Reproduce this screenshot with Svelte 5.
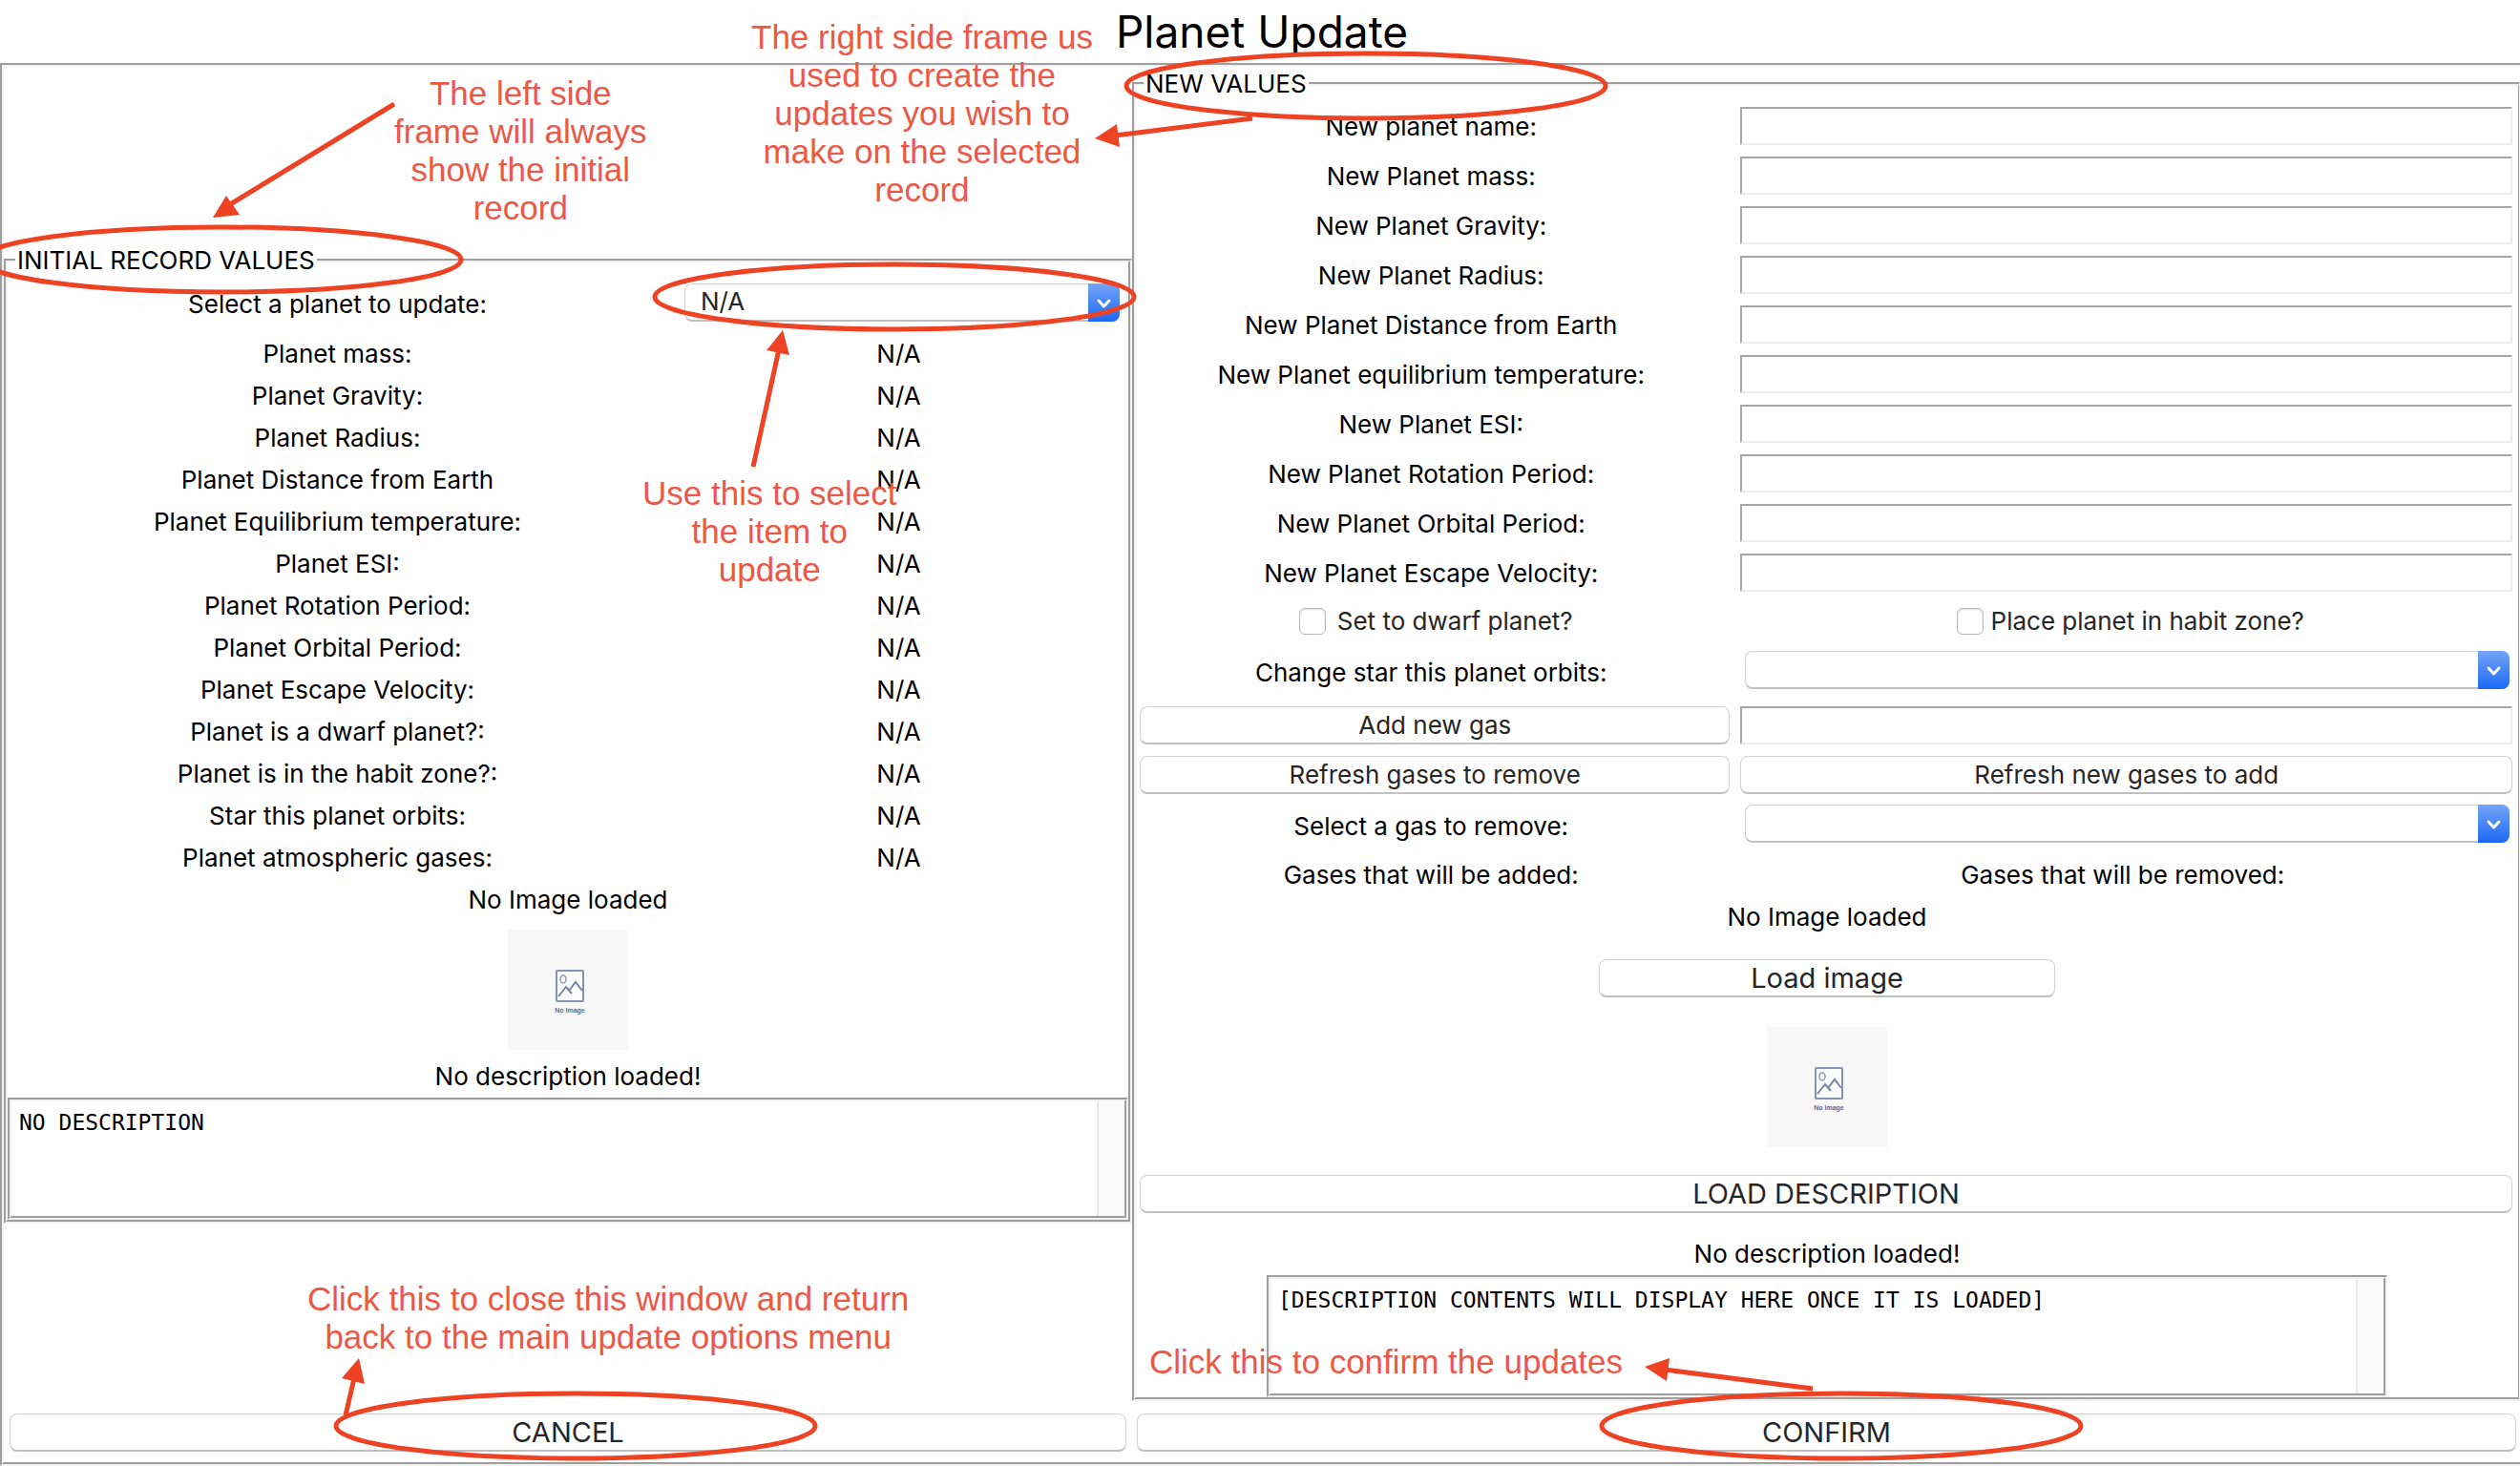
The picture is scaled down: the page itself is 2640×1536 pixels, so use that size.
<script>
  const facts = [
    'Planet mass:', 'Planet Gravity:', 'Planet Radius:', 'Planet Distance from Earth',
    'Planet Equilibrium temperature:', 'Planet ESI:', 'Planet Rotation Period:',
    'Planet Orbital Period:', 'Planet Escape Velocity:', 'Planet is a dwarf planet?:',
    'Planet is in the habit zone?:', 'Star this planet orbits:', 'Planet atmospheric gases:'
  ];
  const fields = [
    'New planet name:', 'New Planet mass:', 'New Planet Gravity:', 'New Planet Radius:',
    'New Planet Distance from Earth', 'New Planet equilibrium temperature:', 'New Planet ESI:',
    'New Planet Rotation Period:', 'New Planet Orbital Period:', 'New Planet Escape Velocity:'
  ];
  const rings = [[232, 272], [1431, 90], [937, 311], [603, 1494], [1929, 1494]];
  const arrows = [
    { line: 'M413 109L238 216', head: '223,228 237,205 251,225' },
    { line: 'M1312 124L1168 142', head: '1147,145 1170,130 1173,154' },
    { line: 'M789 489L816 366', head: '820,346 803,367 827,372' },
    { line: 'M362 1483L371 1444', head: '376,1423 358,1444 382,1450' },
    { line: 'M1899 1455L1744 1435', head: '1723,1432 1749,1423 1746,1447' }
  ];
  let planet = $state('N/A');
</script>

{#snippet placeholder()}
  <svg class="placeholder" viewBox="0 0 126 126" role="img" aria-label="No image">
    <rect width="126" height="126" fill="#f7f7f7" />
    <rect x="51" y="43" width="28" height="32" rx="1" fill="#fbfbfc" stroke="#8493b3" stroke-width="2" />
    <ellipse cx="58" cy="52" rx="3" ry="4" fill="none" stroke="#8a98b5" stroke-width="1.5" />
    <path d="M53 70L61 60L67 67M64 64L71 55L78 64" fill="none" stroke="#7485a6" stroke-width="2" />
    <text x="65" y="87" text-anchor="middle">No Image</text>
  </svg>
{/snippet}

{#snippet chevron()}
  <span class="chevron">
    <svg viewBox="0 0 33 40" aria-hidden="true"><path d="M11 18L16.500 24L22 18" fill="none" stroke="#fff" stroke-width="3" stroke-linecap="round" stroke-linejoin="round" /></svg>
  </span>
{/snippet}

<div class="app">
  <h1>Planet Update</h1>
  <main>
    <div class="panels">
      <fieldset class="initial">
        <legend>INITIAL RECORD VALUES</legend>
        <div class="pair first">
          <label for="planet">Select a planet to update:</label>
          <div class="select">
            <select id="planet" bind:value={planet}><option>N/A</option></select>
            {@render chevron()}
          </div>
        </div>
        <dl>
          {#each facts as fact}
            <div class="pair"><dt>{fact}</dt><dd>N/A</dd></div>
          {/each}
        </dl>
        <p>No Image loaded</p>
        <figure>{@render placeholder()}</figure>
        <label class="caption" for="description">No description loaded!</label>
        <div class="textbox">
          <textarea id="description" readonly>NO DESCRIPTION</textarea>
          <span class="track"></span>
        </div>
      </fieldset>

      <fieldset class="updates">
        <legend>NEW VALUES</legend>
        <div class="form">
          {#each fields as field, i}
            <label for="field{i}">{field}</label>
            <input id="field{i}" type="text" />
          {/each}
          <label class="check"><input type="checkbox" /><span>Set to dwarf planet?</span></label>
          <label class="check tight"><input type="checkbox" /><span>Place planet in habit zone?</span></label>
          <label for="star">Change star this planet orbits:</label>
          <div class="select">
            <select id="star"><option value="" aria-label="None"></option></select>
            {@render chevron()}
          </div>
          <button type="button">Add new gas</button>
          <input type="text" aria-label="New gas" />
          <button type="button">Refresh gases to remove</button>
          <button type="button">Refresh new gases to add</button>
          <label for="gas">Select a gas to remove:</label>
          <div class="select">
            <select id="gas"><option value="" aria-label="None"></option></select>
            {@render chevron()}
          </div>
          <span class="cell">Gases that will be added:</span>
          <span class="cell">Gases that will be removed:</span>
        </div>
        <p>No Image loaded</p>
        <button type="button" class="large load-image">Load image</button>
        <figure>{@render placeholder()}</figure>
        <div class="bar"><button type="button" class="large">LOAD DESCRIPTION</button></div>
        <label class="caption" for="new-description">No description loaded!</label>
        <div class="textbox narrow">
          <textarea id="new-description" readonly>[DESCRIPTION CONTENTS WILL DISPLAY HERE ONCE IT IS LOADED]</textarea>
          <span class="track"></span>
        </div>
      </fieldset>
    </div>
    <footer>
      <button type="button" class="large">CANCEL</button>
      <button type="button" class="large">CONFIRM</button>
    </footer>
  </main>

  <div class="overlay">
    <svg width="2640" height="1536" viewBox="0 0 2640 1536" aria-hidden="true">
      {#each rings as [cx, cy]}
        <ellipse {cx} {cy} rx="251" ry="34" fill="none" stroke="#ee4224" stroke-width="5" />
      {/each}
      {#each arrows as arrow}
        <path d={arrow.line} stroke="#ee4224" stroke-width="5" />
        <polygon points={arrow.head} fill="#ee4224" />
      {/each}
    </svg>
    <p class="note left-frame">The left side<br />frame will always<br />show the initial<br />record</p>
    <p class="note right-frame">The right side frame us<br />used to create the<br />updates you wish to<br />make on the selected<br />record</p>
    <p class="note pick">Use this to select<br />the item to<br />update</p>
    <p class="note close">Click this to close this window and return<br />back to the main update options menu</p>
    <p class="note confirm">Click this to confirm the updates</p>
  </div>
</div>

<style>
  :global(body) { margin: 0; background: #fefefe; }
  .app, .app :global(*) { box-sizing: border-box; }
  .app {
    position: relative;
    overflow: hidden;
    color: #000;
    font: 26px/32px Inter, "Liberation Sans", sans-serif;
  }
  h1 { margin: 0; padding-left: 4px; font-size: 46px; font-weight: 400; line-height: 66px; text-align: center; }
  p, dl, dd, figure { margin: 0; }
  main { border: 4px groove #f2f2f2; border-right: 0; }
  .panels { display: grid; grid-template-columns: 1182fr 1454fr; align-items: center; }
  fieldset { min-width: 0; margin: 0; padding: 0; border: 4px groove #f2f2f2; }
  legend { margin-left: 8px; padding: 0 2px; }
  .updates { margin-top: 2px; border-right-width: 2px; }
  .pair { display: grid; grid-template-columns: 691fr 483fr; height: 44px; align-items: center; text-align: center; }
  .pair dd { padding-left: 2px; }
  .first { height: 60px; }
  .first .select { margin: 0 9px 4px 18px; }
  fieldset > p, .caption { display: block; line-height: 44px; text-align: center; }
  .updates > p { line-height: 38px; }
  figure { display: flex; justify-content: center; padding: 9px 0 6px; }
  .placeholder { display: block; width: 126px; height: 126px; }
  .placeholder text { font: bold 7px "Liberation Sans", sans-serif; fill: #5d6d90; }

  .select { position: relative; height: 40px; }
  select {
    appearance: none;
    display: block;
    width: 100%;
    height: 40px;
    padding: 0 40px 0 16px;
    border: 1px solid #d2d2d2;
    border-bottom: 2px solid #c0c0c0;
    border-radius: 8px;
    background: #fff;
    color: #262626;
    font: inherit;
  }
  .chevron {
    position: absolute;
    top: 0;
    right: 0;
    width: 33px;
    height: 40px;
    border-radius: 0 8px 8px 0;
    background: linear-gradient(#74a5f7, #1d68f6);
    pointer-events: none;
  }
  .chevron svg { display: block; }

  .textbox { display: flex; height: 128px; border: 4px groove #f2f2f2; background: #fff; }
  .narrow { width: 1174px; max-width: 100%; margin: 0 auto; }
  textarea {
    flex: 1;
    min-width: 0;
    padding: 8px;
    border: 0;
    outline: 0;
    resize: none;
    background: transparent;
    color: #000;
    font: 23px/28px "DejaVu Sans Mono", monospace;
  }
  .track { width: 29px; border-left: 2px solid #e9e9e9; background: #fafafa; }

  .form {
    display: grid;
    grid-template-columns: 618fr 808fr;
    grid-template-rows: repeat(10, 52px) 48px 60px 52px 52px 54px 50px;
    column-gap: 11px;
    align-items: center;
    padding: 2px 6px 0 4px;
    text-align: center;
  }
  .form > label, .cell { padding-right: 8px; }
  .form > label:not(.check) { padding-top: 2px; }
  .form .select { margin: 0 3px 4px 5px; }
  input[type='text'] {
    width: 100%;
    height: 40px;
    padding: 0 6px;
    border: 2px solid;
    border-color: #a6a6a6 #ececec #ececec #a6a6a6;
    background: #fff;
    font: inherit;
  }
  .form > .check { display: flex; align-items: center; justify-content: center; gap: 12px; padding: 2px 0 0 2px; color: #262626; }
  .form > .tight { gap: 8px; padding-left: 8px; }
  input[type='checkbox'] {
    appearance: none;
    width: 28px;
    height: 28px;
    margin: 0;
    border: 1px solid #b8b8b8;
    border-radius: 6px;
    background: #fff;
    box-shadow: inset 0 1px 2px #ddd;
  }
  button {
    width: 100%;
    height: 40px;
    padding: 0;
    border: 1px solid #d2d2d2;
    border-bottom: 2px solid #c0c0c0;
    border-radius: 8px;
    background: #fff;
    color: #262626;
    font: inherit;
  }
  .large { font-size: 29px; }
  .load-image { display: block; width: 478px; margin: 25px auto 22px; }
  .bar { padding: 23px 6px 21px 4px; }
  footer { display: grid; grid-template-columns: 1170fr 1445fr; gap: 11px; padding: 13px 4px 11px 6px; }

  .overlay { position: absolute; inset: 0; pointer-events: none; }
  .overlay svg { display: block; }
  .note {
    position: absolute;
    color: #ec5848;
    font: 35px/40px "Liberation Sans", Arial, sans-serif;
    text-align: center;
    white-space: nowrap;
  }
  .left-frame { left: 413px; top: 78px; }
  .right-frame { left: 787px; top: 19px; }
  .pick { left: 673px; top: 497px; }
  .close { left: 322px; top: 1341px; }
  .confirm { left: 1204px; top: 1407px; }
</style>
